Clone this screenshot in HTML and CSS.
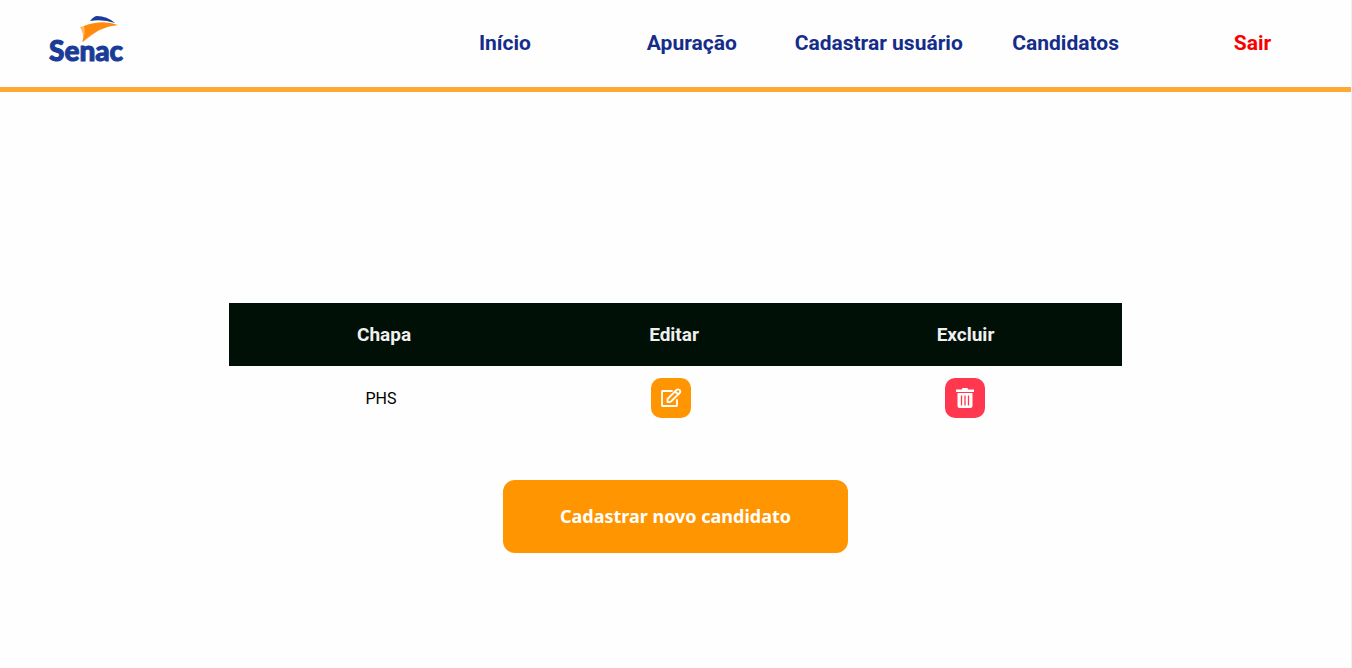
FILE: index.html
```html
<!DOCTYPE html>
<html lang="pt-BR">
<head>
<meta charset="utf-8">
<meta name="viewport" content="width=device-width, initial-scale=1">
<title>Candidatos</title>
<link rel="stylesheet" href="styles.css">
</head>
<body>
<header class="header">
  <a class="logo" href="#" aria-label="Senac">
    <svg class="logo-image" viewBox="0 0 80 52" width="80" height="52" aria-hidden="true">
      <path fill="#1a3c98" d="M42 7Q46 2 49 2Q59 2 67 9Q55 5 42 7Z"/>
      <path fill="#ffb863" d="M32 13L40 11L48 18L35 28Q36 19 32 13Z"/>
      <path fill="#ff8a0c" d="M36 12Q54 5 70 11Q50 13 34 28Q38 19 36 12Z"/>
      <text class="logo-text" x="1" y="47">Senac</text>
    </svg>
  </a>
  <nav class="nav">
    <a class="nav-link" href="#">Início</a>
    <a class="nav-link" href="#">Apuração</a>
    <a class="nav-link" href="#">Cadastrar usuário</a>
    <a class="nav-link" href="#">Candidatos</a>
    <a class="nav-link nav-exit" href="#">Sair</a>
  </nav>
</header>
<main class="main">
  <table class="table">
    <thead>
      <tr><th class="col-name">Chapa</th><th class="col-edit">Editar</th><th class="col-delete">Excluir</th></tr>
    </thead>
    <tbody>
      <tr>
        <td>PHS</td>
        <td>
          <button class="icon-button edit" type="button" aria-label="Editar">
            <svg viewBox="0 0 24 24" width="24" height="24" fill="none" stroke="#fff" stroke-width="1.8" stroke-linejoin="round" stroke-linecap="round">
              <path d="M13 5H3.500Q3 5 3 5.500V19.500Q3 20 3.500 20H17.500Q18 20 18 19.500V14"/>
              <path d="M8.500 16V13L17.500 4Q19 2.700 20.500 4Q22 5.500 20.700 7L12 15.500Q11 16.300 8.500 16ZM16 5.500L19.500 8.500"/>
            </svg>
          </button>
        </td>
        <td>
          <button class="icon-button delete" type="button" aria-label="Excluir">
            <svg viewBox="0 0 24 24" width="24" height="24">
              <path fill="#fff" d="M9 3Q9 2 10 2H14Q15 2 15 3V3.500H21V6H3V3.500H9ZM4.500 7H19.500V20Q19.500 22 17.500 22H6.500Q4.500 22 4.500 20Z"/>
              <path stroke="#ff374f" stroke-width="1.300" d="M8.500 9.500V19.500M12 9.500V19.500M15.500 9.500V19.500"/>
            </svg>
          </button>
        </td>
      </tr>
    </tbody>
  </table>
  <button class="primary" type="button">Cadastrar novo candidato</button>
</main>
</body>
</html>
```
FILE: styles.css
```css
* { box-sizing: border-box; }
body {
  margin: 0;
  min-height: 100vh;
  display: flex;
  flex-direction: column;
  border-right: 1px solid #f0f0f0;
  background: #fefefe;
  font-family: Roboto, sans-serif;
}
.header {
  display: flex;
  align-items: center;
  justify-content: space-between;
  padding: 14px 5px 21px 48px;
  border-bottom: 5px solid #ffa935;
}
.logo-image { display: block; overflow: visible; }
.logo-text {
  font: 900 28px Lato, sans-serif;
  fill: #1a3c98;
  stroke: #1a3c98;
  stroke-width: 1px;
}
.nav {
  width: 72%;
  display: grid;
  grid-template-columns: repeat(5, 1fr);
}
.nav-link {
  padding-top: 6px;
  color: #152d8a;
  font-size: 21px;
  font-weight: 700;
  line-height: 24px;
  text-align: center;
  text-decoration: none;
  white-space: nowrap;
}
.nav-exit { color: #f80000; }
.main {
  flex: 1;
  display: flex;
  flex-direction: column;
  align-items: center;
  justify-content: center;
  gap: 50px;
  padding-top: 96px;
}
.table {
  width: 66vw;
  table-layout: fixed;
  border-collapse: collapse;
  text-align: center;
}
.table th {
  height: 63px;
  padding: 0;
  background: #001007;
  color: #f0f0f0;
  font-size: 19px;
}
.col-name { width: 34%; }
.col-edit { width: 31%; }
.col-delete { width: 35%; }
.table .col-name, .table .col-edit { padding-left: 6px; }
.table td { height: 64px; padding: 0; font-size: 16px; }
.icon-button {
  display: inline-flex;
  align-items: center;
  justify-content: center;
  width: 40px;
  height: 40px;
  padding: 0;
  border: 0;
  border-radius: 10px;
  vertical-align: middle;
}
.edit { background: #ff9500; }
.delete { background: #ff374f; }
.primary {
  padding: 24px 57px;
  border: 0;
  border-radius: 12px;
  background: #ff9500;
  color: #fff;
  font: 700 18px/25px "Noto Sans", sans-serif;
}
```
